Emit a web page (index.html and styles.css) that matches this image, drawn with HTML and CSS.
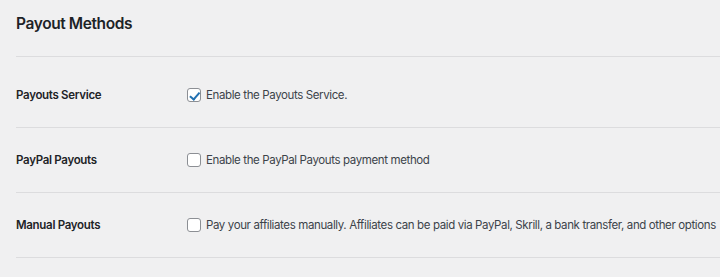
FILE: index.html
```html
<!DOCTYPE html>
<html lang="en">
<head>
  <meta charset="UTF-8" />
  <title>Payout Methods</title>
  <link rel="stylesheet" href="styles.css">
</head>
<body>
  <div class="wrap">
    <h2 class="title">Payout Methods</h2>
    <div class="form-table">
      <div class="row first">
        <div class="label">Payouts Service</div>
        <label class="field"><span class="check checked"></span>Enable the Payouts Service.</label>
      </div>
      <div class="row">
        <div class="label">PayPal Payouts</div>
        <label class="field"><span class="check"></span>Enable the PayPal Payouts payment method</label>
      </div>
      <div class="row">
        <div class="label">Manual Payouts</div>
        <label class="field"><span class="check"></span>Pay your affiliates manually. Affiliates can be paid via PayPal, Skrill, a bank transfer, and other options</label>
      </div>
    </div>
  </div>
</body>
</html>
```

FILE: styles.css
```css
body {
  margin: 0;
  background: #f0f0f1;
  color: #1d2327;
  font-family: Inter, "Liberation Sans", sans-serif;
}
.wrap {
  padding: 0 0 0 16px;
  overflow: hidden;
}
.title {
  margin: 0;
  padding-top: 14px;
  height: 42px;
  font-size: 15.5px;
  font-weight: 600;
  letter-spacing: -0.4px;
  border-bottom: 1px solid #dcdcde;
}
.row {
  display: flex;
  align-items: center;
  height: 64px;
  border-bottom: 1px solid #dcdcde;
  white-space: nowrap;
}
.row.first {
  height: 71px;
  padding-top: 6px;
  box-sizing: border-box;
}
.label {
  width: 171px;
  flex-shrink: 0;
  font-size: 11.5px;
  font-weight: 600;
  letter-spacing: -0.3px;
}
.field {
  display: flex;
  align-items: center;
  font-size: 11.5px;
  letter-spacing: -0.38px;
  color: #3c434a;
}
.check {
  flex-shrink: 0;
  width: 12px;
  height: 12px;
  border: 1px solid #8c8f94;
  border-radius: 3px;
  background: #fff;
  margin-right: 5px;
  position: relative;
}
.check.checked::after {
  content: "";
  position: absolute;
  left: 3.5px;
  top: 0.5px;
  width: 3.5px;
  height: 7.5px;
  border: solid #2271b1;
  border-width: 0 2px 2px 0;
  transform: rotate(40deg);
}
```
